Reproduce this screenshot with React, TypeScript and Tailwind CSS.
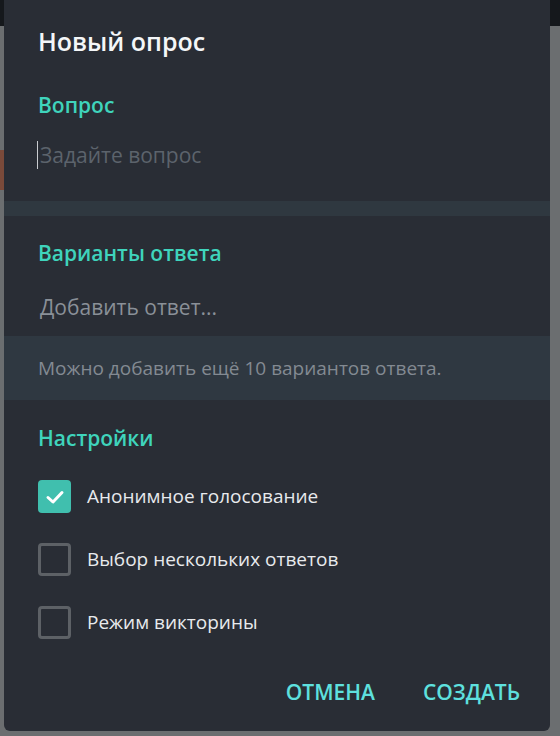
import React from "react";

const font = { fontFamily: '"Open Sans", "Noto Sans", sans-serif' };

function Check({ checked }: { checked?: boolean }) {
  if (checked)
    return (
      <div className="w-[33px] h-[33px] rounded-[4px] bg-[#40bfae] flex items-center justify-center shrink-0">
        <svg width="20" height="16" viewBox="0 0 20 16" fill="none">
          <path d="M3 8.5 L8 13 L17 3.5" stroke="#ffffff" strokeWidth="3" strokeLinecap="round" strokeLinejoin="round" />
        </svg>
      </div>
    );
  return <div className="w-[33px] h-[33px] rounded-[4px] border-[3px] border-[#5d6166] shrink-0" />;
}

function Option({ label, checked }: { label: string; checked?: boolean }) {
  return (
    <div className="flex items-center h-[33px] gap-[16px]">
      <Check checked={checked} />
      <span className="text-[19px] text-[#e8eaed]">{label}</span>
    </div>
  );
}

export default function App() {
  return (
    <div className="w-[560px] h-[736px] bg-[#6b6e70] relative overflow-hidden" style={font}>
      <div className="h-[26px] bg-[#15181c]" />
      <div className="absolute left-0 top-[150px] w-[4px] h-[40px] bg-[#7a4a3a]" />
      <div className="absolute left-[4px] top-0 w-[546px] h-[731px] bg-[#292d35] rounded-b-[6px] flex flex-col">
        <div className="pl-[34px] pt-[25px] text-[25px] font-semibold text-[#f4f6f8] leading-[32px]">Новый опрос</div>
        <div className="pl-[34px] pt-[34px] text-[21px] font-semibold text-[#3fd4bc] leading-[28px]">Вопрос</div>
        <div className="pl-[33px] pt-[21px] pb-[31px] flex items-center">
          <div className="w-[1px] h-[28px] bg-[#c9ccd0]" />
          <span className="text-[21px] text-[#5c636c] leading-[30px] ml-[2px]">Задайте вопрос</span>
        </div>
        <div className="h-[15px] bg-[#2f3840]" />
        <div className="pl-[34px] pt-[23px] text-[21px] font-semibold text-[#3fd4bc] leading-[28px]">Варианты ответа</div>
        <div className="pl-[36px] pt-[25px] pb-[14px] text-[21px] text-[#8a9098] leading-[30px]">Добавить ответ...</div>
        <div className="h-[64px] bg-[#2f3841] pl-[34px] flex items-center text-[19px] text-[#838a92]">
          Можно добавить ещё 10 вариантов ответа.
        </div>
        <div className="pl-[34px] pt-[24px] text-[21px] font-semibold text-[#3fd4bc] leading-[28px]">Настройки</div>
        <div className="pl-[34px] pt-[28px] flex flex-col gap-[30px]">
          <Option label="Анонимное голосование" checked />
          <Option label="Выбор нескольких ответов" />
          <Option label="Режим викторины" />
        </div>
        <div className="flex justify-end gap-[48px] pr-[30px] pt-[39px] text-[21px] font-semibold text-[#5ee0de] leading-[28px]">
          <span>ОТМЕНА</span>
          <span>СОЗДАТЬ</span>
        </div>
      </div>
    </div>
  );
}
